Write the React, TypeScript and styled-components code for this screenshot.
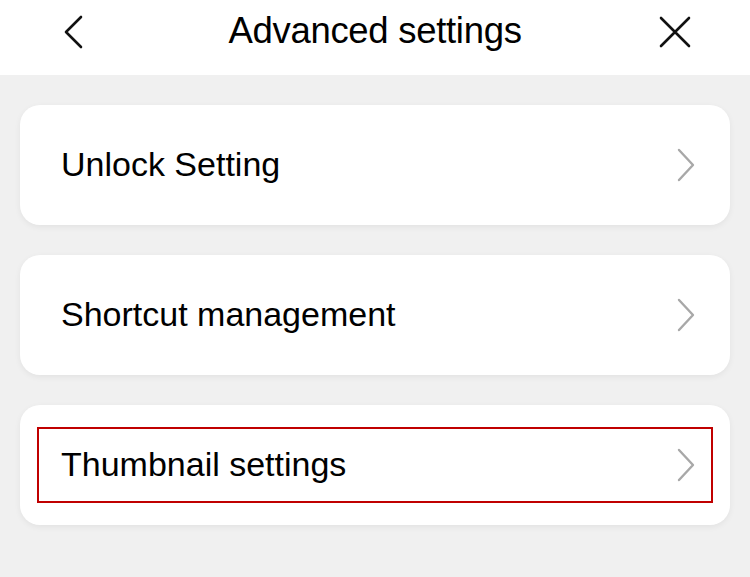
import React from 'react';
import styled, { createGlobalStyle } from 'styled-components';

const GlobalStyle = createGlobalStyle`
  html, body {
    margin: 0;
    padding: 0;
    background: #f0f0f0;
    font-family: 'Liberation Sans', Arial, Helvetica, sans-serif;
  }
`;

const Page = styled.div`
  width: 750px;
  height: 577px;
  background: #f0f0f0;
  overflow: hidden;
`;

const Header = styled.header`
  height: 75px;
  background: #fff;
  display: grid;
  grid-template-columns: 150px 1fr 150px;
  align-items: center;
`;

const IconButton = styled.button<{ $align: 'start' | 'end' }>`
  display: flex;
  justify-content: ${(p) => (p.$align === 'start' ? 'flex-start' : 'flex-end')};
  align-items: center;
  background: none;
  border: 0;
  padding: ${(p) => (p.$align === 'start' ? '0 0 0 62px' : '0 58px 0 0')};
  height: 75px;
  margin-top: -12px;
  cursor: pointer;
`;

const Title = styled.h1`
  margin: -13px 0 0;
  text-align: center;
  font-size: 36.5px;
  font-weight: 400;
  color: #000;
  letter-spacing: -0.3px;
`;

const List = styled.div`
  display: flex;
  flex-direction: column;
  gap: 30px;
  padding: 30px 20px;
`;

const Card = styled.div`
  background: #fff;
  border-radius: 20px;
  padding: 22px 17px;
  box-shadow: 0 2px 6px rgba(0, 0, 0, 0.06);
`;

const Row = styled.div<{ $highlighted?: boolean }>`
  height: 76px;
  box-sizing: border-box;
  display: flex;
  align-items: center;
  justify-content: space-between;
  padding: 0 15px 0 22px;
  border: 2px solid ${(p) => (p.$highlighted ? '#c00000' : 'transparent')};
`;

const Label = styled.span`
  font-size: 34px;
  color: #000;
  margin-top: -2px;
`;

const Chevron = () => (
  <svg width="20" height="34" viewBox="0 0 20 34" fill="none">
    <path d="M3 2 L17 17 L3 32" stroke="#a8a8a8" strokeWidth="2.4" strokeLinecap="round" strokeLinejoin="round" />
  </svg>
);

const items = ['Unlock Setting', 'Shortcut management', 'Thumbnail settings'];

export default function App() {
  return (
    <Page>
      <GlobalStyle />
      <Header>
        <IconButton $align="start" aria-label="Back">
          <svg width="22" height="34" viewBox="0 0 22 34" fill="none">
            <path d="M19 2 L4 17 L19 32" stroke="#111" strokeWidth="2.6" strokeLinecap="round" strokeLinejoin="round" />
          </svg>
        </IconButton>
        <Title>Advanced settings</Title>
        <IconButton $align="end" aria-label="Close">
          <svg width="34" height="34" viewBox="0 0 34 34" fill="none">
            <path d="M3 3 L31 31 M31 3 L3 31" stroke="#111" strokeWidth="2.6" strokeLinecap="round" />
          </svg>
        </IconButton>
      </Header>
      <List>
        {items.map((item, i) => (
          <Card key={item}>
            <Row $highlighted={i === items.length - 1}>
              <Label>{item}</Label>
              <Chevron />
            </Row>
          </Card>
        ))}
      </List>
    </Page>
  );
}
